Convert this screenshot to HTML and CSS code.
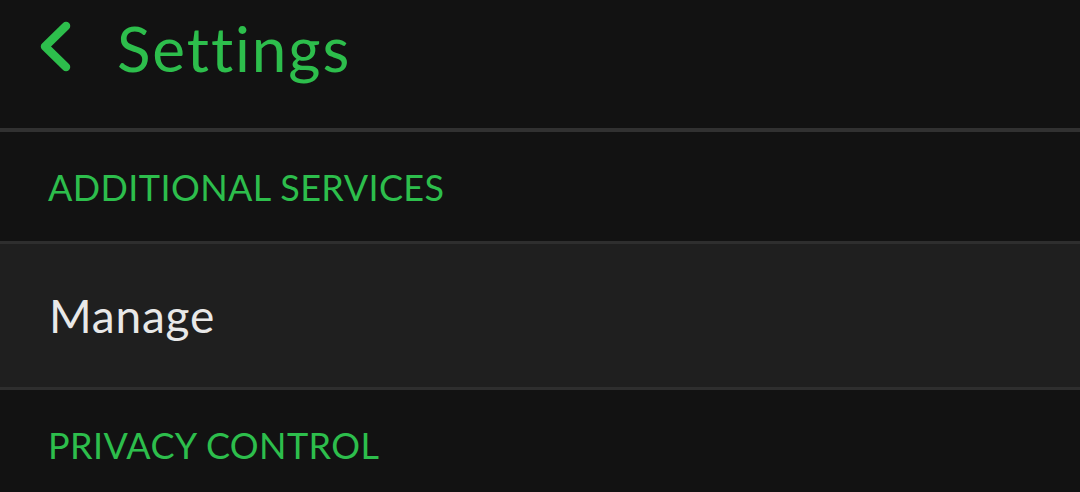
FILE: index.html
```html
<!DOCTYPE html>
<html>
<head>
<meta charset="utf-8">
<link rel="stylesheet" href="styles.css">
</head>
<body>
<div class="screen">
  <header class="topbar">
    <svg class="back" width="40" height="60" viewBox="0 0 40 60">
      <path d="M28 6 L7 26.5 L28 47" fill="none" stroke="#2dbe4c" stroke-width="8.5" stroke-linecap="round" stroke-linejoin="round"/>
    </svg>
    <h1 class="title">Settings</h1>
  </header>
  <div class="divider thick"></div>
  <div class="section">ADDITIONAL SERVICES</div>
  <div class="divider"></div>
  <div class="row">Manage</div>
  <div class="divider"></div>
  <div class="section">PRIVACY CONTROL</div>
</div>
</body>
</html>
```
FILE: styles.css
```css
html, body {
  margin: 0;
  padding: 0;
  background: #121212;
}
.screen {
  width: 1080px;
  height: 492px;
  overflow: hidden;
  background: #121212;
  font-family: Lato, "Noto Sans", sans-serif;
}
.topbar {
  height: 128px;
  display: flex;
  align-items: flex-start;
}
.back {
  margin: 20px 0 0 38px;
  flex: none;
}
.title {
  margin: 10px 0 0 39px;
  font-size: 62px;
  font-weight: 400;
  letter-spacing: 1.9px;
  color: #2dbe4c;
  line-height: 76px;
}
.divider {
  height: 3px;
  background: #2e2e2e;
}
.divider.thick {
  height: 4px;
  background: #313131;
}
.section {
  height: 109px;
  box-sizing: border-box;
  padding: 0 0 0 48px;
  display: flex;
  align-items: center;
  font-size: 36px;
  letter-spacing: 0.4px;
  color: #2dbe4c;
}
.row {
  height: 143px;
  background: #1f1f1f;
  box-sizing: border-box;
  padding-left: 49px;
  display: flex;
  align-items: center;
  font-size: 46px;
  letter-spacing: 0.8px;
  color: #e8e8e8;
}
```
